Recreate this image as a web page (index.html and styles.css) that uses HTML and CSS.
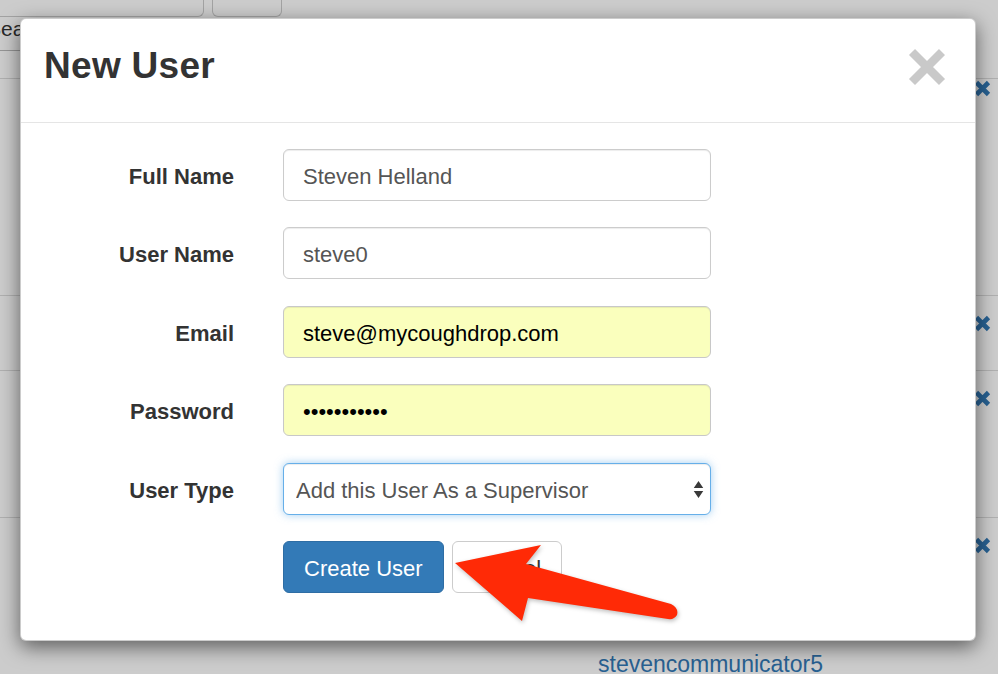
FILE: index.html
```html
<!DOCTYPE html>
<html lang="en">
<head>
<meta charset="utf-8">
<title>New User</title>
<link rel="stylesheet" href="styles.css">
</head>
<body>
<div class="page">
  <div class="topbar">
    <div class="search-field"></div>
    <div class="search-button"></div>
  </div>
  <div class="section-title"><span class="section-text">Search</span></div>
  <div class="list">
    <div class="list-row row-first">
      <svg class="remove" viewBox="0 0 17 17"><path d="M2.5 2.5L14.5 14.5M14.5 2.5L2.5 14.5"/></svg>
    </div>
    <div class="list-row row-second">
      <svg class="remove" viewBox="0 0 17 17"><path d="M2.5 2.5L14.5 14.5M14.5 2.5L2.5 14.5"/></svg>
    </div>
    <div class="list-row row-third">
      <svg class="remove" viewBox="0 0 17 17"><path d="M2.5 2.5L14.5 14.5M14.5 2.5L2.5 14.5"/></svg>
    </div>
    <div class="list-row row-last">
      <svg class="remove" viewBox="0 0 17 17"><path d="M2.5 2.5L14.5 14.5M14.5 2.5L2.5 14.5"/></svg>
      <a class="user-link" href="#">stevencommunicator5</a>
    </div>
  </div>
</div>

<div class="backdrop"></div>

<div class="modal">
  <div class="modal-header">
    <h3 class="modal-title">New User</h3>
    <button class="close" type="button" aria-label="Close">
      <svg viewBox="0 0 38 38"><path d="M4 4L34 34M34 4L4 34"/></svg>
    </button>
  </div>
  <form class="modal-body">
    <label class="form-label">Full Name</label>
    <input class="form-control" type="text" value="Steven Helland">

    <label class="form-label">User Name</label>
    <input class="form-control" type="text" value="steve0">

    <label class="form-label">Email</label>
    <input class="form-control autofilled" type="text" value="steve@mycoughdrop.com">

    <label class="form-label">Password</label>
    <input class="form-control autofilled" type="password" value="xxxxxxxxxxx">

    <label class="form-label">User Type</label>
    <div class="select-wrap">
      <select class="form-control select-focus">
        <option>Add this User As a Supervisor</option>
      </select>
      <svg class="select-arrows" viewBox="0 0 10 18"><path d="M0.5 7.5L5 1L9.5 7.5Z M0.5 10.5L5 17L9.5 10.5Z"/></svg>
    </div>

    <div></div>
    <div class="actions">
      <button class="btn btn-primary" type="button">Create User</button>
      <button class="btn btn-default" type="button">Cancel</button>
    </div>
  </form>
</div>

<svg class="annotation" viewBox="0 0 998 674">
  <path d="M455 563 L541 545 L526 564 L671 604 Q679 608 677 615 Q674 620 668 619 L528 598 L522 621 Z"/>
</svg>
</body>
</html>
```

FILE: styles.css
```css
* {
  box-sizing: border-box;
}

html, body {
  margin: 0;
  padding: 0;
}

body {
  width: 998px;
  height: 674px;
  overflow: hidden;
  position: relative;
  background: #fff;
  font-family: "Liberation Sans", Arial, sans-serif;
  color: #333;
}

/* ---------- background page ---------- */
.page {
  width: 998px;
}

.topbar {
  display: flex;
  gap: 8px;
  height: 17px;
}

.search-field {
  width: 214px;
  margin-left: -10px;
  border: 1px solid #ccc;
  border-top: 0;
  border-radius: 0 0 6px 6px;
}

.search-button {
  width: 70px;
  border: 1px solid #ccc;
  border-top: 0;
  border-radius: 0 0 6px 6px;
}

.section-title {
  width: 520px;
  height: 34px;
  border-bottom: 1px solid #bbb;
}

.section-text {
  display: block;
  margin-left: -13px;
  padding-top: 3px;
  font-size: 21px;
  line-height: 18px;
  color: #333;
}

.list {
  margin-top: 27px;
}

.list-row {
  display: flex;
  flex-direction: column;
  border-top: 1px solid #ddd;
  padding: 19px 7px 0 0;
}

.row-first {
  height: 217px;
  padding-top: 1px;
}

.row-second {
  height: 75px;
}

.row-third {
  height: 147px;
}

.remove {
  align-self: flex-end;
  width: 17px;
  height: 17px;
  fill: none;
  stroke: #337ab7;
  stroke-width: 4.6;
}

.user-link {
  display: block;
  margin: 96px 0 0 598px;
  font-size: 23px;
  line-height: 28px;
  color: #337ab7;
  text-decoration: none;
}

.backdrop {
  position: absolute;
  inset: 0;
  background: rgba(0, 0, 0, 0.2);
}

/* ---------- modal ---------- */
.modal {
  position: absolute;
  left: 20px;
  top: 18px;
  width: 956px;
  background: #fff;
  border: 1px solid rgba(0, 0, 0, 0.2);
  border-radius: 6px;
  box-shadow: 0 6px 20px rgba(0, 0, 0, 0.55);
}

.modal-header {
  display: flex;
  justify-content: space-between;
  align-items: flex-start;
  padding: 27px 29px 36px 23px;
  border-bottom: 1px solid #e5e5e5;
}

.modal-title {
  margin: 0;
  font-size: 37px;
  line-height: 40px;
  letter-spacing: 0.3px;
  font-weight: bold;
  color: #333;
}

.close {
  margin-top: 2px;
  width: 38px;
  height: 38px;
  padding: 0;
  border: 0;
  background: transparent;
}

.close svg {
  display: block;
  width: 38px;
  height: 38px;
  fill: none;
  stroke: #c9c9c9;
  stroke-width: 8.5;
}

.modal-body {
  display: grid;
  grid-template-columns: 213px 428px;
  column-gap: 49px;
  row-gap: 26.4px;
  padding: 26px 0 47px 0;
  margin: 0;
}

.form-label {
  align-self: center;
  padding-top: 4px;
  text-align: right;
  font-size: 22px;
  font-weight: bold;
  color: #333;
}

.form-control {
  display: block;
  width: 100%;
  height: 52px;
  padding: 4px 19px 0;
  font-family: "Liberation Sans", Arial, sans-serif;
  font-size: 22px;
  color: #555;
  background: #fff;
  border: 1px solid #ccc;
  border-radius: 6px;
  box-shadow: inset 0 1px 1px rgba(0, 0, 0, 0.075);
  outline: none;
}

.autofilled {
  background: #faffbd;
  color: #000;
  border-color: #c8c8c8;
}

.select-wrap {
  position: relative;
}

.select-focus {
  -webkit-appearance: none;
  appearance: none;
  padding-left: 12px;
  border-color: #66afe9;
  box-shadow: inset 0 1px 1px rgba(0, 0, 0, 0.075), 0 0 8px rgba(102, 175, 233, 0.6);
}

.select-arrows {
  position: absolute;
  right: 7px;
  top: 17px;
  width: 11px;
  height: 19px;
  fill: #3a3a3a;
}

.actions {
  display: flex;
  gap: 8px;
}

.btn {
  height: 52px;
  padding: 4px 20px 0;
  font-family: "Liberation Sans", Arial, sans-serif;
  font-size: 22px;
  border: 1px solid;
  border-radius: 6px;
}

.btn-primary {
  background: #337ab7;
  border-color: #2e6da4;
  color: #fff;
}

.btn-default {
  background: #fff;
  border-color: #ccc;
  color: #333;
}

/* ---------- annotation arrow ---------- */
.annotation {
  position: absolute;
  left: 0;
  top: 0;
  width: 998px;
  height: 674px;
  pointer-events: none;
  fill: #ff2a06;
  filter: drop-shadow(1px 2px 2px rgba(0, 0, 0, 0.25));
}
```
